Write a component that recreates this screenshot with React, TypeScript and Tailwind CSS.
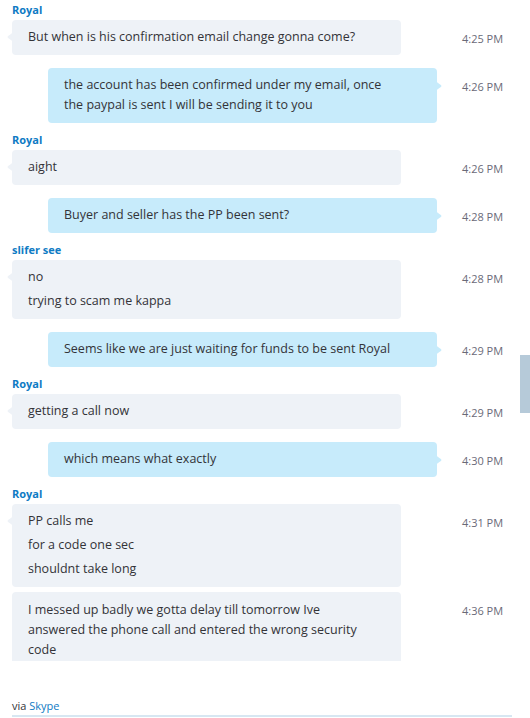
import React from "react";

type Msg = {
  side: "in" | "out";
  name?: string;
  lines: string[][];
  time: string;
  mt: string;
  tail?: boolean;
  cut?: boolean;
};

const msgs: Msg[] = [
  { side: "in", name: "Royal", lines: [["But when is his confirmation email change gonna come?"]], time: "4:25 PM", mt: "mt-[2px]", tail: true },
  { side: "out", lines: [["the account has been confirmed under my email, once", "the paypal is sent I will be sending it to you"]], time: "4:26 PM", mt: "mt-[13px]", tail: true },
  { side: "in", name: "Royal", lines: [["aight"]], time: "4:26 PM", mt: "mt-[9px]", tail: true },
  { side: "out", lines: [["Buyer and seller has the PP been sent?"]], time: "4:28 PM", mt: "mt-[13px]", tail: true },
  { side: "in", name: "slifer see", lines: [["no"], ["trying to scam me kappa"]], time: "4:28 PM", mt: "mt-[9px]", tail: true },
  { side: "out", lines: [["Seems like we are just waiting for funds to be sent Royal"]], time: "4:29 PM", mt: "mt-[13px]", tail: true },
  { side: "in", name: "Royal", lines: [["getting a call now"]], time: "4:29 PM", mt: "mt-[9px]", tail: true },
  { side: "out", lines: [["which means what exactly"]], time: "4:30 PM", mt: "mt-[13px]", tail: true },
  { side: "in", name: "Royal", lines: [["PP calls me"], ["for a code one sec"], ["shouldnt take long"]], time: "4:31 PM", mt: "mt-[9px]", tail: true },
  {
    side: "in",
    lines: [["I messed up badly we gotta delay till tomorrow Ive", "answered the phone call and entered the wrong security", "code"]],
    time: "4:36 PM",
    mt: "mt-[5px]",
    cut: true,
  },
];

function Tail({ side }: { side: "in" | "out" }) {
  if (side === "in") {
    return (
      <svg width="6" height="12" viewBox="0 0 6 12" className="absolute left-[-5px] top-[11px]">
        <path d="M6 0 C6 3 0.5 4.5 0.5 6 C0.5 7.5 6 9 6 12 Z" fill="#eef2f7" />
      </svg>
    );
  }
  return (
    <svg width="6" height="12" viewBox="0 0 6 12" className="absolute right-[-5px] top-[12px]">
      <path d="M0 0 C0 3 5.5 4.5 5.5 6 C5.5 7.5 0 9 0 12 Z" fill="#c7ebfb" />
    </svg>
  );
}

function Row({ m }: { m: Msg }) {
  const isIn = m.side === "in";
  return (
    <div className={m.mt}>
      {m.name && (
        <div className="ml-[12px] mb-[2px] h-[16px] text-[11px] leading-[16px] font-bold text-[#0f7bc4]">
          {m.name}
        </div>
      )}
      <div className="flex">
        <div className={`w-[437px] ${isIn ? "pl-[12px]" : "pl-[48px]"}`}>
          <div
            className={`relative w-[389px] ${isIn ? "bg-[#eef2f7]" : "bg-[#c7ebfb]"} ${
              m.cut ? "rounded-t-[4px] pt-[8px] h-[69px]" : "rounded-[4px] pt-[7px] pb-[8px]"
            } px-[16px] flex flex-col gap-[4px]`}
          >
            {m.tail && <Tail side={m.side} />}
            {m.lines.map((p, i) => (
              <div key={i}>
                {p.map((l, j) => (
                  <div key={j} className="leading-[20px] whitespace-nowrap">
                    {l}
                  </div>
                ))}
              </div>
            ))}
          </div>
        </div>
        <div className="ml-[25px] pt-[9px] text-[11px] leading-[20px] text-[#6a6a78]">{m.time}</div>
      </div>
    </div>
  );
}

export default function App() {
  return (
    <div
      className="relative h-[718px] w-[530px] overflow-hidden bg-white text-[12.5px] text-[#333338]"
      style={{ fontFamily: '"Open Sans", "Noto Sans", sans-serif' }}
    >
      {msgs.map((m, i) => (
        <Row key={i} m={m} />
      ))}
      <div className="ml-[12px] mt-[37px] text-[11px] leading-[16px]">
        via <span className="text-[#0f7bc4]">Skype</span>
      </div>
      <div className="ml-[12px] mt-[1px] h-[2px] w-[500px] bg-[#d7e7f2]" />
      <div className="absolute right-0 top-[355px] h-[58px] w-[10px] bg-[#b6cad9]" />
    </div>
  );
}
